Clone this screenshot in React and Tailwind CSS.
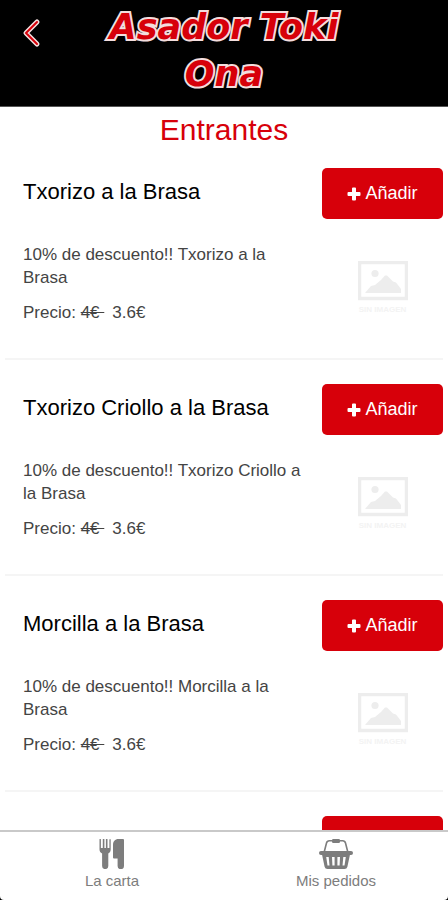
const items = [
  { id: 1, name: "Txorizo a la Brasa", discount: "10%", oldPrice: "4€", price: "3.6€" },
  { id: 2, name: "Txorizo Criollo a la Brasa", discount: "10%", oldPrice: "4€", price: "3.6€" },
  { id: 3, name: "Morcilla a la Brasa", discount: "10%", oldPrice: "4€", price: "3.6€" },
  { id: 4, name: "Chistorra a la Brasa", discount: "10%", oldPrice: "4€", price: "3.6€" },
]

function BackIcon() {
  return (
    <svg className="w-5 h-8" viewBox="0 0 20 32" fill="none" strokeLinecap="round" strokeLinejoin="round">
      <path d="M16 5L5 16l11 11" stroke="#f3dede" strokeWidth="5" />
      <path d="M16 5L5 16l11 11" stroke="#d7000a" strokeWidth="2" />
    </svg>
  )
}

function PlusIcon() {
  return (
    <svg className="w-3.5 h-3.5" viewBox="0 0 14 14" fill="currentColor" aria-hidden="true">
      <path d="M6 0.5h2a1 1 0 0 1 1 1V5h3.500a1 1 0 0 1 1 1v2a1 1 0 0 1-1 1H9v3.500a1 1 0 0 1-1 1H6a1 1 0 0 1-1-1V9H1.500a1 1 0 0 1-1-1V6a1 1 0 0 1 1-1H5V1.500a1 1 0 0 1 1-1z" />
    </svg>
  )
}

function CutleryIcon() {
  return (
    <svg className="w-[26px] h-[30px]" viewBox="0 0 26 30" fill="currentColor" aria-hidden="true">
      <path d="M0.500 0.500a.7.700 0 0 1 1.400 0V9h1.900V0.500a.8.800 0 0 1 1.600 0V9h1.500V0.500a.8.800 0 0 1 1.600 0V9h1.900V0.500a.7.700 0 0 1 1.300 0V10.500c0 2-1 3.200-2.400 3.900V27a3.100 3.100 0 0 1-6.200 0V14.400C1.500 13.700 0.500 12.500 0.500 10.500z" />
      <path d="M19.500 0H24a1 1 0 0 1 1 1v26a3.200 3.200 0 0 1-6.400 0v-7.500h-3.600a1 1 0 0 1-1-1V6c0-3.500 2-6 5.500-6z" />
    </svg>
  )
}

function BasketIcon() {
  return (
    <svg className="w-[34px] h-[30px]" viewBox="0 0 34 30" fill="none" aria-hidden="true">
      <path d="M13 1.800h-2.500a3 3 0 0 0-3 2.200L5.200 13M21 1.800h2.500a3 3 0 0 1 3 2.200L28.800 13" stroke="currentColor" strokeWidth="1.600" />
      <rect x="13" y="0" width="8" height="4" rx="1.200" fill="currentColor" />
      <rect x="0" y="12" width="34" height="4" rx="2" fill="currentColor" />
      <path fill="currentColor" fillRule="evenodd" d="M3 15.500h28l-2.600 12.200A3 3 0 0 1 25.500 30h-17a3 3 0 0 1-2.900-2.300zM7.200 18l1.300 8.500h2L9.700 18zM13 18l.4 8.500h2.200V18zM18.400 18v8.500h2.200L21 18zM24.300 18l-.8 8.500h2l1.300-8.500z" />
    </svg>
  )
}

function NoImage() {
  return (
    <div className="flex flex-col items-center text-[#ededed]">
      <svg className="w-[50px] h-10" viewBox="0 0 50 40" aria-hidden="true">
        <rect x="1.500" y="1.500" width="47" height="36" fill="none" stroke="currentColor" strokeWidth="3.500" />
        <circle cx="17" cy="12.500" r="3.600" fill="currentColor" />
        <path d="M7 32l6-7 4-1 6-5 4-4.500 2 0 6 6 3 1 5 6.500 0 4z" fill="currentColor" />
      </svg>
      <span className="mt-1 text-[8px] leading-[10px] font-bold text-[#f3f3f3]">SIN IMAGEN</span>
    </div>
  )
}

function MenuItem({ item }) {
  return (
    <li className="mx-[5px] h-[216px] pt-6 border-b-2 border-[#f5f5f5]">
      <div className="flex items-center">
        <h3 className="flex-1 pl-[18px] pb-1 text-[22px] text-black">{item.name}</h3>
        <button className="w-[121px] h-[51px] flex items-center justify-center gap-1 rounded-[5px] bg-[#d7000a] text-white text-[18px]">
          <PlusIcon />
          Añadir
        </button>
      </div>
      <div className="flex mt-6">
        <div className="flex-1 pl-[18px] pr-4 text-[17px] leading-[23px] text-[#444]">
          <p>{`${item.discount} de descuento!! ${item.name}`}</p>
          <p className="mt-3">
            Precio: <s className="mr-2">{`${item.oldPrice}\u00a0`}</s>
            {item.price}
          </p>
        </div>
        <div className="w-[121px] pt-[18px]">
          <NoImage />
        </div>
      </div>
    </li>
  )
}

export default function App() {
  return (
    <div className="h-screen flex flex-col bg-white font-['Liberation_Sans',Arial,sans-serif]">
      <header className="relative bg-black px-20 pt-1 pb-2 border-b border-[#555]">
        <button aria-label="Volver" className="absolute left-[21px] top-[17px]">
          <BackIcon />
        </button>
        <h1 className="text-center italic font-bold text-[35px] leading-[47px] text-[#d7000a] font-['DejaVu_Sans',Verdana,sans-serif] [-webkit-text-stroke:4px_#f3dede] [paint-order:stroke_fill]">
          Asador Toki Ona
        </h1>
      </header>

      <main className="flex-1 min-h-0 overflow-y-auto [scrollbar-width:none]">
        <h2 className="text-center text-[30px] leading-[37px] pt-1 -mb-1 text-[#d7000a]">Entrantes</h2>
        <ul>
          {items.map((item) => (
            <MenuItem key={item.id} item={item} />
          ))}
        </ul>
      </main>

      <div className="bg-black">
        <nav className="h-[70px] flex bg-white border-t-2 border-[#c9c9c9] rounded-b-[4px] text-[#7d7d7d] text-[15px] leading-5">
          <a href="#carta" className="flex-1 flex flex-col items-center pt-[7px] gap-[2px]">
            <CutleryIcon />
            La carta
          </a>
          <a href="#pedidos" className="flex-1 flex flex-col items-center pt-[7px] gap-[2px]">
            <BasketIcon />
            Mis pedidos
          </a>
        </nav>
      </div>
    </div>
  )
}
